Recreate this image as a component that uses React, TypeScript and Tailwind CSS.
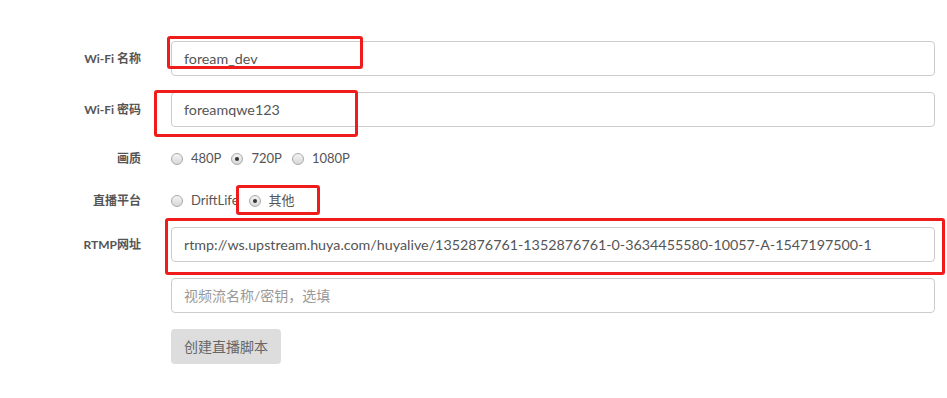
import React from "react";

const font = { fontFamily: 'Lato, "Noto Sans CJK SC", sans-serif' };

function Radio({ checked, label }: { checked?: boolean; label: string }) {
  return (
    <label className="flex items-center mr-[10px]">
      <span className="w-[12px] h-[12px] rounded-full border border-[#a9a9a9] bg-gradient-to-b from-[#f4f4f4] to-[#d8d8d8] flex items-center justify-center">
        {checked && <span className="w-[4px] h-[4px] rounded-full bg-[#333]" />}
      </span>
      <span className="ml-[8px] text-[13px] text-[#555]">{label}</span>
    </label>
  );
}

function Label({ children }: { children: React.ReactNode }) {
  return (
    <div className="w-[141px] shrink-0 text-right text-[12px] font-bold text-[#555]">{children}</div>
  );
}

function Input({ value, placeholder }: { value?: string; placeholder?: string }) {
  return (
    <div className="ml-[30px] w-[764px] h-[35px] border border-[#cccccc] rounded-[4px] bg-white flex items-center pl-[12px] whitespace-nowrap overflow-hidden">
      {value ? (
        <span className="text-[14.3px] text-[#555]">{value}</span>
      ) : (
        <span className="text-[14px] text-[#999]">{placeholder}</span>
      )}
    </div>
  );
}

export default function App() {
  return (
    <div className="relative w-[947px] h-[398px] bg-white" style={font}>
      <div className="flex flex-col pt-[41px]">
        <div className="flex items-center h-[35px]">
          <Label>Wi-Fi 名称</Label>
          <Input value="foream_dev" />
        </div>
        <div className="flex items-center h-[35px] mt-[16px]">
          <Label>Wi-Fi 密码</Label>
          <Input value="foreamqwe123" />
        </div>
        <div className="flex items-center h-[32px] mt-[16px]">
          <Label>画质</Label>
          <div className="ml-[30px] flex items-center">
            <Radio label="480P" />
            <Radio label="720P" checked />
            <Radio label="1080P" />
          </div>
        </div>
        <div className="flex items-center h-[32px] mt-[10px]">
          <Label>直播平台</Label>
          <div className="ml-[30px] flex items-center">
            <Radio label="DriftLife" />
            <Radio label="其他" checked />
          </div>
        </div>
        <div className="flex items-center h-[35px] mt-[10px]">
          <Label>RTMP网址</Label>
          <Input value="rtmp://ws.upstream.huya.com/huyalive/1352876761-1352876761-0-3634455580-10057-A-1547197500-1" />
        </div>
        <div className="flex items-center h-[35px] mt-[16px]">
          <div className="w-[141px] shrink-0" />
          <Input placeholder="视频流名称/密钥，选填" />
        </div>
        <div className="flex items-center h-[35px] mt-[16px]">
          <div className="w-[141px] shrink-0" />
          <button className="ml-[30px] w-[110px] h-[35px] rounded-[4px] bg-[#dddddd] text-[14px] text-[#666]">创建直播脚本</button>
        </div>
      </div>

      <div className="absolute left-[167px] top-[36px] w-[196px] h-[33px] border-[3px] border-[#f01c1c] rounded-[3px]" />
      <div className="absolute left-[154px] top-[90px] w-[204px] h-[47px] border-[3px] border-[#f01c1c] rounded-[3px]" />
      <div className="absolute left-[236px] top-[185px] w-[84px] h-[30px] border-[3px] border-[#f01c1c] rounded-[3px]" />
      <div className="absolute left-[165px] top-[218px] w-[780px] h-[57px] border-[3px] border-[#f01c1c] rounded-[3px]" />
    </div>
  );
}
